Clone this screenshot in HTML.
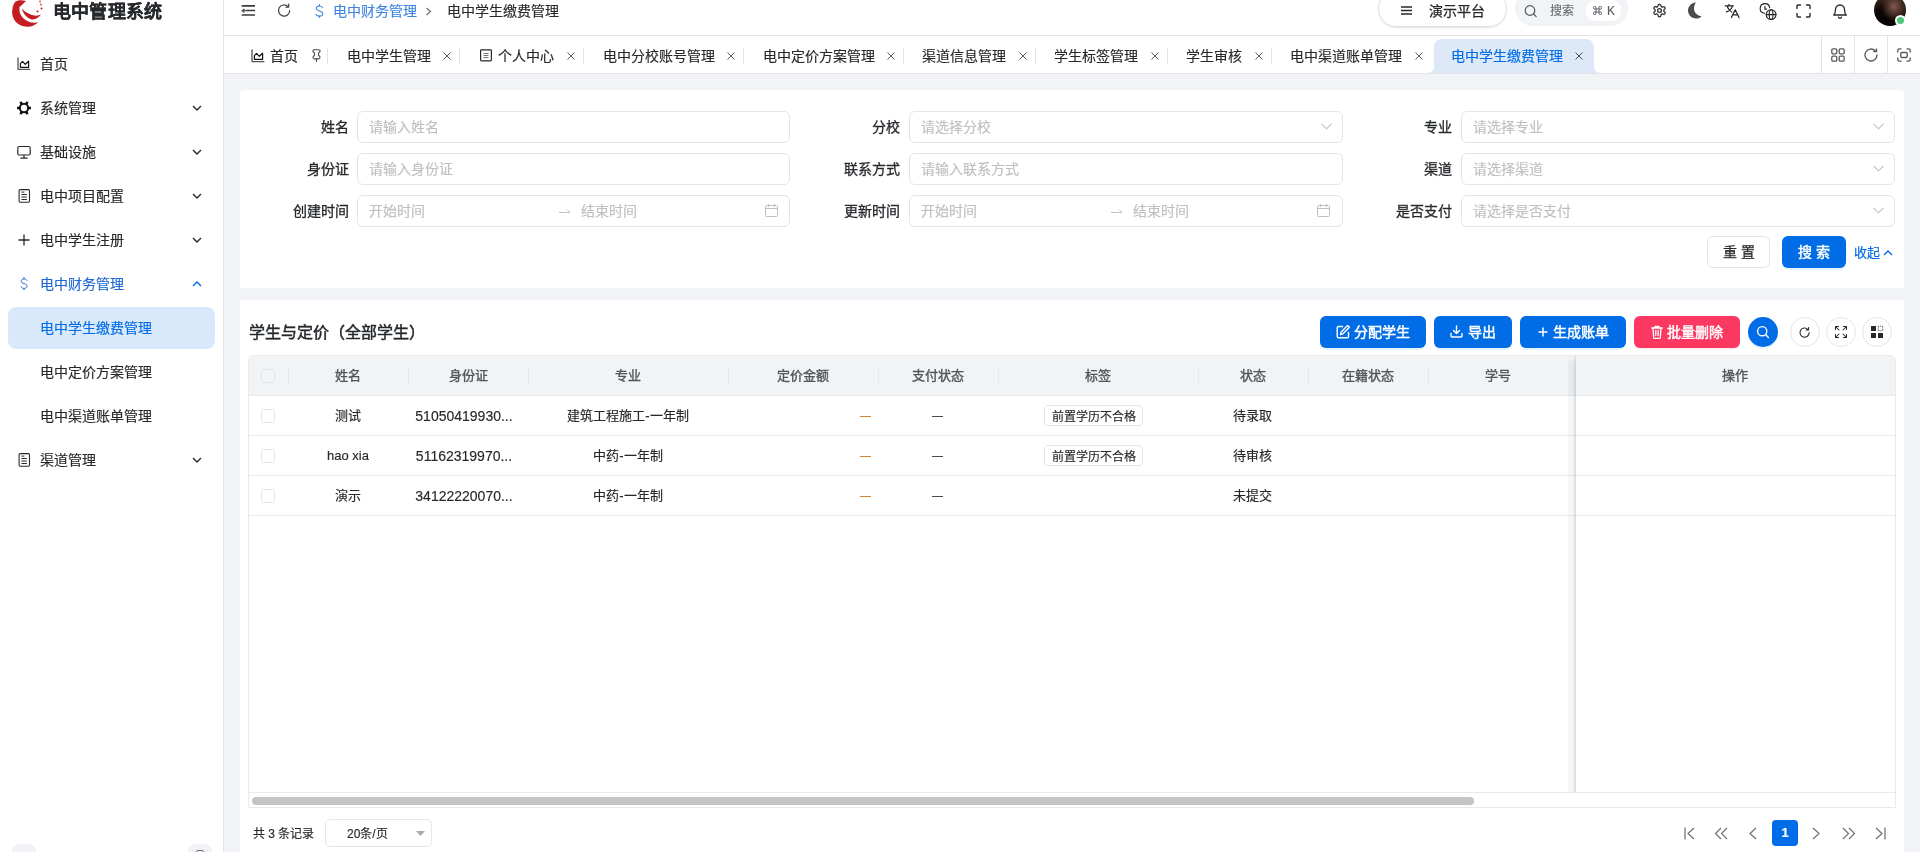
<!DOCTYPE html>
<html lang="zh-CN">
<head>
<meta charset="utf-8">
<title>电中学生缴费管理</title>
<style>
*{box-sizing:border-box;margin:0;padding:0}
html,body{width:1920px;height:852px;overflow:hidden;background:#f1f3f6;font-family:"Liberation Sans",sans-serif;font-size:14px;color:#26292c}
.abs{position:absolute}
svg{display:block}
/* sidebar */
#side{position:absolute;left:0;top:0;width:224px;height:852px;background:#fff;border-right:1px solid #e4e4e7}
.logo-t{position:absolute;left:53px;top:0px;font-size:18px;font-weight:700;color:#26292c;line-height:24px;letter-spacing:0.2px}
.mi{position:absolute;left:8px;width:207px;height:42px;border-radius:8px;display:flex;align-items:center;color:#26292c}
.mi .ic{position:absolute;left:9px;top:14px;width:14px;height:14px}
.mi .tx{position:absolute;left:32px;top:0;line-height:42px}
.mi .ch{position:absolute;left:184px;top:16px;width:10px;height:10px}
.mi.act{background:#d9e9fb;color:#006ce6}
.mi.open{color:#1f68d2}
/* header */
#hdr{position:absolute;left:224px;top:0;width:1696px;height:36px;background:#fff;border-bottom:1px solid #e4e4e7}
#tabs{position:absolute;left:224px;top:36px;width:1696px;height:38px;background:#fff;border-bottom:1px solid #e4e4e7}
.tab{position:absolute;top:0;height:37px;line-height:41px;color:#26292c;white-space:nowrap}
.sep{position:absolute;top:12px;width:1px;height:16px;background:#e4e4e7}
.x{position:absolute;top:16px;width:8px;height:8px;fill:none}
.card{position:absolute;background:#fff;border-radius:8px}
.lbl{position:absolute;font-weight:400;-webkit-text-stroke:0.3px #26292c;text-align:right;line-height:32px;width:100px;color:#26292c}
.inp{position:absolute;height:32px;border:1px solid #e4e4e7;border-radius:6px;line-height:30px;padding-left:11px;color:#bfbfbf}
.btn{position:absolute;height:32px;border-radius:6px;color:#fff;text-align:center;line-height:32px;background:#006ce6;font-size:14px}
.cb{position:absolute;width:14px;height:14px;border:1px solid #e4e5e7;border-radius:3px;background:#fff}
.th{position:absolute;top:356px;height:40px;line-height:40px;font-size:13px;font-weight:400;-webkit-text-stroke:0.35px #505458;text-align:center;color:#505458}
.td{position:absolute;line-height:40px;font-size:13px;text-align:center;color:#26292c;white-space:nowrap}
.med{-webkit-text-stroke:0.35px currentColor}
.tag{position:absolute;height:21px;border:1px solid #e4e4e7;border-radius:4px;font-size:12px;line-height:23px;text-align:center;color:#26292c;background:#fff}
</style>
</head>
<body><div id="root" style="position:absolute;left:0;top:0;width:1920px;height:852px;overflow:hidden;will-change:transform;-webkit-text-stroke-width:0.15px">

<!-- SIDEBAR -->
<div id="side">
  <svg class="abs" style="left:0;top:0" width="50" height="30" viewBox="0 0 50 30">
    <path d="M15 2 C12 6 11.5 13 13 17 C15 23 21 27 28 26.8 C32 26.7 35.5 25 38 22.3 C33 23.5 27 22 23 18 C20 15 19 11 19.5 7 C21 6 23 4 26 1 C22 0 17 0 15 2 Z" fill="#c41d22"/>
    <path d="M22 8.5 C23 13 26 17.5 31 19.2 C35 20 38.5 18 41 14.5 C38 16 34 16 30.5 14.5 C27 13 24 11 22 8.5 Z" fill="#c41d22"/>
    <circle cx="40" cy="1.5" r="0.9" fill="#d84a4e"/><circle cx="41" cy="4.5" r="0.9" fill="#d84a4e"/><circle cx="41.5" cy="8.5" r="1" fill="#c41d22"/><circle cx="37.5" cy="11.5" r="1" fill="#c41d22"/>
  </svg>
  <div class="logo-t">电中管理系统</div>

  <div class="mi" style="top:43px"><svg class="ic" viewBox="0 0 14 14" fill="none" stroke="#26292c" stroke-width="1.3" stroke-linejoin="round"><path d="M1 0.6V12.4H13.2" stroke="#555"/><path d="M3.4 10.3V6.7L5.5 4.4L8.3 7.3L11.6 4.2V10.3Z" stroke="#111" stroke-width="1.2"/></svg><span class="tx">首页</span></div>
  <div class="mi" style="top:87px"><svg class="ic" viewBox="0 0 14 14"><g transform="translate(7 7)" fill="#111"><circle r="4.2" fill="none" stroke="#111" stroke-width="2"/><rect x="4.6" y="-1.3" width="2.5" height="2.6" rx="0.4" transform="rotate(0)"/><rect x="4.6" y="-1.3" width="2.5" height="2.6" rx="0.4" transform="rotate(60)"/><rect x="4.6" y="-1.3" width="2.5" height="2.6" rx="0.4" transform="rotate(120)"/><rect x="4.6" y="-1.3" width="2.5" height="2.6" rx="0.4" transform="rotate(180)"/><rect x="4.6" y="-1.3" width="2.5" height="2.6" rx="0.4" transform="rotate(240)"/><rect x="4.6" y="-1.3" width="2.5" height="2.6" rx="0.4" transform="rotate(300)"/></g></svg><span class="tx">系统管理</span><svg class="ch" viewBox="0 0 10 10" fill="none" stroke="#26292c" stroke-width="1.4"><path d="M1 3l4 4 4-4"/></svg></div>
  <div class="mi" style="top:131px"><svg class="ic" viewBox="0 0 14 14" fill="none" stroke="#26292c" stroke-width="1.2"><rect x="0.8" y="1.5" width="12.4" height="8.5" rx="1.5"/><path d="M7 10v3M3.8 13.2h6.4" stroke-linecap="round"/></svg><span class="tx">基础设施</span><svg class="ch" viewBox="0 0 10 10" fill="none" stroke="#26292c" stroke-width="1.4"><path d="M1 3l4 4 4-4"/></svg></div>
  <div class="mi" style="top:175px"><svg class="ic" viewBox="0 0 14 14" fill="none" stroke="#26292c" stroke-width="1.1"><rect x="2.1" y="0.6" width="10.4" height="12.6" rx="1.1"/><path d="M4.4 3.1h3M4.4 5.5h5.5M4.4 8h5.5M4.4 10.5h5.5" stroke-width="1"/></svg><span class="tx">电中项目配置</span><svg class="ch" viewBox="0 0 10 10" fill="none" stroke="#26292c" stroke-width="1.4"><path d="M1 3l4 4 4-4"/></svg></div>
  <div class="mi" style="top:219px"><svg class="ic" viewBox="0 0 14 14" fill="none" stroke="#26292c" stroke-width="1.3"><path d="M7 1.5v11M1.5 7h11"/></svg><span class="tx">电中学生注册</span><svg class="ch" viewBox="0 0 10 10" fill="none" stroke="#26292c" stroke-width="1.4"><path d="M1 3l4 4 4-4"/></svg></div>
  <div class="mi open" style="top:263px"><svg class="ic" viewBox="0 0 14 14" fill="none" stroke="#2f6fd0" stroke-width="1" stroke-linecap="round"><path d="M9.9 3.4C9.4 2.4 8.4 1.9 7 1.9 5.3 1.9 4.2 2.8 4.2 4.1 4.2 5.5 5.4 6.1 7 6.5 8.8 7 10 7.6 10 9.1 10 10.5 8.8 11.4 7 11.4 5.6 11.4 4.5 10.8 4 9.8"/><path d="M7 0.5V1.9M7 11.4V12.8"/></svg><span class="tx">电中财务管理</span><svg class="ch" viewBox="0 0 10 10" fill="none" stroke="#006ce6" stroke-width="1.4"><path d="M1 7l4-4 4 4"/></svg></div>
  <div class="mi act" style="top:307px"><span class="tx">电中学生缴费管理</span></div>
  <div class="mi" style="top:351px"><span class="tx">电中定价方案管理</span></div>
  <div class="mi" style="top:395px"><span class="tx">电中渠道账单管理</span></div>
  <div class="mi" style="top:439px"><svg class="ic" viewBox="0 0 14 14" fill="none" stroke="#26292c" stroke-width="1.1"><rect x="2.1" y="0.6" width="10.4" height="12.6" rx="1.1"/><path d="M4.4 3.1h3M4.4 5.5h5.5M4.4 8h5.5M4.4 10.5h5.5" stroke-width="1"/></svg><span class="tx">渠道管理</span><svg class="ch" viewBox="0 0 10 10" fill="none" stroke="#26292c" stroke-width="1.4"><path d="M1 3l4 4 4-4"/></svg></div>

  <div class="abs" style="left:12px;top:844px;width:24px;height:24px;border-radius:6px;background:#f1f3f6"></div>
  <div class="abs" style="left:188px;top:844px;width:24px;height:24px;border-radius:6px;background:#f1f3f6"></div>
  <div class="abs" style="left:196px;top:850px;width:8px;height:8px;border-radius:2px;border:1.2px solid #6b7075"></div>
</div>

<!-- HEADER -->
<div id="hdr">
  <svg class="abs" style="left:17px;top:4px" width="14" height="13" viewBox="0 0 14 13" fill="none" stroke="#3a3d40" stroke-width="1.7" stroke-linecap="round"><path d="M1.4 1.9h12M5 6.5h8.4M1.4 11h12"/><path d="M1 6.5L3.2 4.9V8.1z" fill="#3a3d40" stroke-width="0.8" stroke-linejoin="round"/></svg>
  <svg class="abs" style="left:53px;top:3px" width="15" height="15" viewBox="0 0 15 15" fill="none" stroke="#3a3d40" stroke-width="1.2" stroke-linecap="round"><path d="M12.7 7.6A5.6 5.6 0 1 1 10.9 3.4"/><path d="M11.7 1.2v2.9H8.9" stroke-linejoin="round"/></svg>
  <svg class="abs" style="left:90px;top:4px" width="11" height="14" viewBox="0 0 11 14" fill="none" stroke="#3f86e0" stroke-width="1.05" stroke-linecap="round"><path d="M8.6 3.6C8.1 2.5 7 1.9 5.4 1.9 3.5 1.9 2.2 2.9 2.2 4.3 2.2 5.8 3.6 6.4 5.4 6.9 7.4 7.4 8.8 8.1 8.8 9.7 8.8 11.2 7.4 12.1 5.4 12.1 3.8 12.1 2.6 11.5 2 10.4"/><path d="M5.4 0.4V1.9M5.4 12.1V13.6"/></svg>
  <div class="abs" style="left:109px;top:0;line-height:22px;color:#3f86e0">电中财务管理</div>
  <svg class="abs" style="left:201px;top:7px" width="7" height="9" viewBox="0 0 7 9" fill="none" stroke="#6b7075" stroke-width="1.2"><path d="M1.5 1l4 3.5-4 3.5"/></svg>
  <div class="abs" style="left:223px;top:0;line-height:22px;color:#26292c">电中学生缴费管理</div>

  <div class="abs" style="left:1154px;top:-10px;width:129px;height:37px;border:1px solid #dcdee2;border-radius:18px;box-shadow:0 1.5px 1px rgba(0,0,0,0.07)"></div>
  <svg class="abs" style="left:1177px;top:6px" width="11" height="9" viewBox="0 0 11 9" fill="none" stroke="#26292c" stroke-width="1.4"><path d="M0 1h11M0 4.5h11M0 8h11"/></svg>
  <div class="abs" style="left:1205px;top:0;line-height:22px;color:#26292c;-webkit-text-stroke:0.25px #26292c">演示平台</div>

  <div class="abs" style="left:1291px;top:-10px;width:113px;height:36px;background:#f1f3f6;border-radius:18px"></div>
  <svg class="abs" style="left:1300px;top:5px" width="14" height="13" viewBox="0 0 14 13" fill="none" stroke="#55595d" stroke-width="1.2" stroke-linecap="round"><circle cx="6" cy="5.5" r="4.8"/><path d="M9.6 9l2.6 2.6"/></svg>
  <div class="abs" style="left:1326px;top:0;line-height:23px;font-size:12px;color:#6b6f73">搜索</div>
  <div class="abs" style="left:1362px;top:0px;width:35px;height:21px;background:#fff;border-radius:9px"></div>
  <svg class="abs" style="left:1369px;top:6px" width="9" height="9" viewBox="0 0 9 9" fill="none" stroke="#5f6368" stroke-width="1"><path d="M3 3h3v3H3zM3 3V1.8A1.3 1.3 0 1 0 1.8 3H3M6 3V1.8A1.3 1.3 0 1 1 7.2 3H6M3 6v1.2A1.3 1.3 0 1 1 1.8 6H3M6 6v1.2A1.3 1.3 0 1 0 7.2 6H6"/></svg>
  <div class="abs" style="left:1383px;top:0;line-height:22px;font-size:12px;color:#5f6368">K</div>

  <svg class="abs" style="left:1428px;top:3px" width="15" height="15" viewBox="0 0 24 24" fill="none" stroke="#26292c" stroke-width="2" stroke-linejoin="round"><path d="M12.22 2h-.44a2 2 0 0 0-2 2v.18a2 2 0 0 1-1 1.73l-.43.25a2 2 0 0 1-2 0l-.15-.08a2 2 0 0 0-2.73.73l-.22.38a2 2 0 0 0 .73 2.73l.15.1a2 2 0 0 1 1 1.72v.51a2 2 0 0 1-1 1.74l-.15.09a2 2 0 0 0-.73 2.73l.22.38a2 2 0 0 0 2.73.73l.15-.08a2 2 0 0 1 2 0l.43.25a2 2 0 0 1 1 1.73V20a2 2 0 0 0 2 2h.44a2 2 0 0 0 2-2v-.18a2 2 0 0 1 1-1.73l.43-.25a2 2 0 0 1 2 0l.15.08a2 2 0 0 0 2.73-.73l.22-.39a2 2 0 0 0-.73-2.73l-.15-.08a2 2 0 0 1-1-1.74v-.5a2 2 0 0 1 1-1.74l.15-.09a2 2 0 0 0 .73-2.73l-.22-.38a2 2 0 0 0-2.73-.73l-.15.08a2 2 0 0 1-2 0l-.43-.25a2 2 0 0 1-1-1.73V4a2 2 0 0 0-2-2z"/><circle cx="12" cy="12" r="3"/></svg>
  <svg class="abs" style="left:1463px;top:2px" width="15" height="17" viewBox="0 0 15 17"><path d="M9 0.5C4.5 0.8 1 4.3 1 8.6c0 4.4 3.6 8 8 8 2.3 0 4.3-.9 5.7-2.4C10.5 14 7 10.8 7 6.6 7 4.2 7.8 2 9 0.5z" fill="#4a4d50"/></svg>
  <svg class="abs" style="left:1500px;top:4px" width="16" height="15" viewBox="0 0 16 15" fill="none" stroke="#1f2225" stroke-width="1.2" stroke-linecap="round" stroke-linejoin="round"><path d="M4.9 -0.2v1.2M1.2 1.8H9.4M8.4 2.4C7.6 4.8 5.4 6.9 2.4 7.9M3.4 2.9C4.4 5 6 6.9 7.8 7.9"/><path d="M7.4 13.6L11.2 5.8 15 13.6M8.8 10.9h4.8"/></svg>
  <svg class="abs" style="left:1535px;top:3px" width="18" height="18" viewBox="0 0 18 18" fill="none" stroke="#1f2225" stroke-width="1.1" stroke-linecap="round"><path d="M10.7 4.6A4.8 4.8 0 1 0 5.5 10.2"/><path d="M5.9 3.2V6.1H7.5"/><circle cx="12.1" cy="11.6" r="4.9"/><ellipse cx="12.1" cy="11.6" rx="1.9" ry="4.9"/><path d="M7.2 11.6H17"/></svg>
  <svg class="abs" style="left:1572px;top:4px" width="15" height="14" viewBox="0 0 15 14" fill="none" stroke="#26292c" stroke-width="1.4" stroke-linecap="round"><path d="M1 4.5V2a1 1 0 0 1 1-1h2.5M10.5 1H13a1 1 0 0 1 1 1v2.5M14 9.5V12a1 1 0 0 1-1 1h-2.5M4.5 13H2a1 1 0 0 1-1-1V9.5"/></svg>
  <svg class="abs" style="left:1609px;top:3px" width="14" height="16" viewBox="0 0 14 16" fill="none" stroke="#26292c" stroke-width="1.3" stroke-linecap="round" stroke-linejoin="round"><path d="M2.5 6.5a4.5 4.5 0 0 1 9 0c0 4 1.8 5.5 1.8 5.5H.7s1.8-1.5 1.8-5.5"/><path d="M5.5 14.2a1.6 1.6 0 0 0 3 0"/></svg>
  <div class="abs" style="left:1650px;top:-6px;width:32px;height:32px;border-radius:50%;background:radial-gradient(ellipse 40% 45% at 62% 40%,rgba(140,95,85,0.9) 0,rgba(90,60,48,0.6) 60%,rgba(0,0,0,0) 100%),radial-gradient(circle at 35% 75%,#050302 0,#0a0605 30%,rgba(0,0,0,0) 55%),linear-gradient(160deg,#3a2418 0,#2a1a12 60%,#1a0f0a 100%)"></div>
  <div class="abs" style="left:1671px;top:15px;width:11px;height:11px;border-radius:50%;background:#4cc97a;border:2px solid #fff"></div>
</div>

<!-- TABS -->
<div id="tabs">
  <svg class="abs" style="left:27px;top:13px" width="14" height="14" viewBox="0 0 14 14" fill="none" stroke="#26292c" stroke-width="1.3" stroke-linejoin="round"><path d="M1 0.6V12.6H13.4" stroke="#555"/><path d="M3.4 10.3V6.7L5.5 4.4L8.3 7.3L11.6 4.2V10.3Z" stroke="#111" stroke-width="1.2"/></svg>
  <div class="tab" style="left:46px">首页</div>
  <svg class="abs" style="left:87px;top:13px" width="11" height="14" viewBox="0 0 11 14" fill="none" stroke="#4a4d50" stroke-width="1.1" stroke-linejoin="round"><path d="M3.2 0.8h4.6a1.3 1.3 0 0 1 0 2.6C7.3 4.5 7.3 6 8.3 7a1.6 1.6 0 0 1-1 2.9H3.7a1.6 1.6 0 0 1-1-2.9c1-1 1-2.5.5-3.6a1.3 1.3 0 0 1 0-2.6z"/><path d="M5.5 9.9v3"/></svg>
  <div class="sep" style="left:103px"></div>

  <div class="tab" style="left:123px">电中学生管理</div>
  <svg class="x" style="left:219px" viewBox="0 0 8 8" stroke="#55595d" stroke-width="1"><path d="M0.5 0.5l7 7M7.5 0.5l-7 7"/></svg>
  <div class="sep" style="left:235px"></div>

  <svg class="abs" style="left:256px;top:13px" width="12" height="13" viewBox="0 0 12 13" fill="none" stroke="#26292c" stroke-width="1.2"><rect x="0.6" y="0.9" width="10.8" height="11" rx="0.8"/><path d="M3.5 4.5h5M3.5 6.5h5M3.5 8.5h5" stroke-width="0.9" stroke="#666"/></svg>
  <div class="tab" style="left:274px">个人中心</div>
  <svg class="x" style="left:343px" viewBox="0 0 8 8" stroke="#55595d" stroke-width="1"><path d="M0.5 0.5l7 7M7.5 0.5l-7 7"/></svg>
  <div class="sep" style="left:359px"></div>

  <div class="tab" style="left:379px">电中分校账号管理</div>
  <svg class="x" style="left:503px" viewBox="0 0 8 8" stroke="#55595d" stroke-width="1"><path d="M0.5 0.5l7 7M7.5 0.5l-7 7"/></svg>
  <div class="sep" style="left:519px"></div>

  <div class="tab" style="left:539px">电中定价方案管理</div>
  <svg class="x" style="left:663px" viewBox="0 0 8 8" stroke="#55595d" stroke-width="1"><path d="M0.5 0.5l7 7M7.5 0.5l-7 7"/></svg>
  <div class="sep" style="left:679px"></div>

  <div class="tab" style="left:698px">渠道信息管理</div>
  <svg class="x" style="left:795px" viewBox="0 0 8 8" stroke="#55595d" stroke-width="1"><path d="M0.5 0.5l7 7M7.5 0.5l-7 7"/></svg>
  <div class="sep" style="left:811px"></div>

  <div class="tab" style="left:830px">学生标签管理</div>
  <svg class="x" style="left:927px" viewBox="0 0 8 8" stroke="#55595d" stroke-width="1"><path d="M0.5 0.5l7 7M7.5 0.5l-7 7"/></svg>
  <div class="sep" style="left:943px"></div>

  <div class="tab" style="left:962px">学生审核</div>
  <svg class="x" style="left:1031px" viewBox="0 0 8 8" stroke="#55595d" stroke-width="1"><path d="M0.5 0.5l7 7M7.5 0.5l-7 7"/></svg>
  <div class="sep" style="left:1047px"></div>

  <div class="tab" style="left:1066px">电中渠道账单管理</div>
  <svg class="x" style="left:1191px" viewBox="0 0 8 8" stroke="#55595d" stroke-width="1"><path d="M0.5 0.5l7 7M7.5 0.5l-7 7"/></svg>

  <svg class="abs" style="left:1202px;top:3px" width="176" height="34" viewBox="0 0 176 34"><path d="M0 34 C5 34 8 32 8 27 V8 C8 3.6 11.6 0 16 0 H160 C164.4 0 168 3.6 168 8 V27 C168 32 171 34 176 34 Z" fill="#dde8f8"/></svg>
  <div class="tab" style="left:1227px;color:#006ce6">电中学生缴费管理</div>
  <svg class="x" style="left:1351px" viewBox="0 0 8 8" stroke="#4a4d50" stroke-width="1"><path d="M0.5 0.5l7 7M7.5 0.5l-7 7"/></svg>

  <div class="abs" style="left:1597px;top:0;width:1px;height:37px;background:#e4e4e7"></div>
  <div class="abs" style="left:1630px;top:0;width:1px;height:37px;background:#e4e4e7"></div>
  <div class="abs" style="left:1663px;top:0;width:1px;height:37px;background:#e4e4e7"></div>
  <svg class="abs" style="left:1607px;top:12px" width="14" height="14" viewBox="0 0 14 14" fill="none" stroke="#55595d" stroke-width="1.3"><rect x="0.8" y="0.8" width="5" height="5" rx="1.2"/><rect x="8.2" y="0.8" width="5" height="5" rx="1.2"/><rect x="0.8" y="8.2" width="5" height="5" rx="1.2"/><rect x="8.2" y="8.2" width="5" height="5" rx="1.2"/></svg>
  <svg class="abs" style="left:1640px;top:12px" width="14" height="14" viewBox="0 0 14 14" fill="none" stroke="#55595d" stroke-width="1.3" stroke-linecap="round"><path d="M13 7A6 6 0 1 1 11.2 2.7"/><path d="M12.5 0.8v2.8H9.7"/></svg>
  <svg class="abs" style="left:1673px;top:12px" width="14" height="14" viewBox="0 0 14 14" fill="none" stroke="#55595d" stroke-width="1.3" stroke-linecap="round"><path d="M0.8 4V2.5A1.7 1.7 0 0 1 2.5 0.8H4M10 0.8h1.5a1.7 1.7 0 0 1 1.7 1.7V4M13.2 10v1.5a1.7 1.7 0 0 1-1.7 1.7H10M4 13.2H2.5A1.7 1.7 0 0 1 .8 11.5V10"/><rect x="3.8" y="4.5" width="6.4" height="5" rx="1"/></svg>
</div>

<!-- SEARCH CARD -->
<div class="card" style="left:240px;top:90px;width:1664px;height:198px;border-radius:4px 4px 0 0"></div>
<div class="lbl" style="left:249px;top:111px">姓名</div>
<div class="inp" style="left:357px;top:111px;width:433px">请输入姓名</div>
<div class="lbl" style="left:249px;top:153px">身份证</div>
<div class="inp" style="left:357px;top:153px;width:433px">请输入身份证</div>
<div class="lbl" style="left:249px;top:195px">创建时间</div>
<div class="inp" style="left:357px;top:195px;width:433px">开始时间</div>
<svg class="abs" style="left:559px;top:208px" width="12" height="6" viewBox="0 0 12 6" fill="none" stroke="#bfbfbf" stroke-width="1"><path d="M0 4.5h11M8 1.5l3 3"/></svg>
<div class="abs" style="left:581px;top:196px;line-height:30px;color:#bfbfbf">结束时间</div>
<svg class="abs" style="left:765px;top:204px" width="13" height="13" viewBox="0 0 13 13" fill="none" stroke="#bfbfbf" stroke-width="1"><rect x="0.5" y="1.5" width="12" height="11" rx="1"/><path d="M0.5 4.5h12M3.5 0v3M9.5 0v3"/></svg>

<div class="lbl" style="left:800px;top:111px">分校</div>
<div class="inp" style="left:909px;top:111px;width:434px">请选择分校</div>
<svg class="abs" style="left:1321px;top:123px" width="11" height="7" viewBox="0 0 11 7" fill="none" stroke="#bfbfbf" stroke-width="1.1"><path d="M0.5 0.8l5 5 5-5"/></svg>
<div class="lbl" style="left:800px;top:153px">联系方式</div>
<div class="inp" style="left:909px;top:153px;width:434px">请输入联系方式</div>
<div class="lbl" style="left:800px;top:195px">更新时间</div>
<div class="inp" style="left:909px;top:195px;width:434px">开始时间</div>
<svg class="abs" style="left:1111px;top:208px" width="12" height="6" viewBox="0 0 12 6" fill="none" stroke="#bfbfbf" stroke-width="1"><path d="M0 4.5h11M8 1.5l3 3"/></svg>
<div class="abs" style="left:1133px;top:196px;line-height:30px;color:#bfbfbf">结束时间</div>
<svg class="abs" style="left:1317px;top:204px" width="13" height="13" viewBox="0 0 13 13" fill="none" stroke="#bfbfbf" stroke-width="1"><rect x="0.5" y="1.5" width="12" height="11" rx="1"/><path d="M0.5 4.5h12M3.5 0v3M9.5 0v3"/></svg>

<div class="lbl" style="left:1352px;top:111px">专业</div>
<div class="inp" style="left:1461px;top:111px;width:434px">请选择专业</div>
<svg class="abs" style="left:1873px;top:123px" width="11" height="7" viewBox="0 0 11 7" fill="none" stroke="#bfbfbf" stroke-width="1.1"><path d="M0.5 0.8l5 5 5-5"/></svg>
<div class="lbl" style="left:1352px;top:153px">渠道</div>
<div class="inp" style="left:1461px;top:153px;width:434px">请选择渠道</div>
<svg class="abs" style="left:1873px;top:165px" width="11" height="7" viewBox="0 0 11 7" fill="none" stroke="#bfbfbf" stroke-width="1.1"><path d="M0.5 0.8l5 5 5-5"/></svg>
<div class="lbl" style="left:1352px;top:195px">是否支付</div>
<div class="inp" style="left:1461px;top:195px;width:434px">请选择是否支付</div>
<svg class="abs" style="left:1873px;top:207px" width="11" height="7" viewBox="0 0 11 7" fill="none" stroke="#bfbfbf" stroke-width="1.1"><path d="M0.5 0.8l5 5 5-5"/></svg>

<div class="abs" style="left:1707px;top:236px;width:63px;height:32px;border:1px solid #e4e4e7;border-radius:6px;line-height:30px;text-align:center;color:#26292c;letter-spacing:4px;text-indent:4px;-webkit-text-stroke:0.25px #26292c">重置</div>
<div class="btn" style="left:1782px;top:236px;width:64px;letter-spacing:4px;text-indent:4px;-webkit-text-stroke:0.45px #fff;box-shadow:0 2px 0 rgba(5,145,255,0.1)">搜索</div>
<div class="abs" style="left:1854px;top:237px;line-height:32px;font-size:13px;color:#006ce6">收起</div>
<svg class="abs" style="left:1883px;top:249px" width="10" height="7" viewBox="0 0 10 7" fill="none" stroke="#006ce6" stroke-width="1.4"><path d="M1 6l4-4 4 4"/></svg>

<!-- TABLE CARD -->
<div class="card" style="left:240px;top:300px;width:1664px;height:600px;border-radius:0"></div>
<div class="abs" style="left:249px;top:319px;line-height:28px;font-size:16px;-webkit-text-stroke:0.5px #26292c;color:#26292c">学生与定价（全部学生）</div>

<div class="btn" style="left:1320px;top:316px;width:106px;box-shadow:0 2px 0 rgba(5,145,255,0.1)"></div>
<svg class="abs" style="left:1336px;top:325px" width="14" height="14" viewBox="0 0 14 14" fill="none" stroke="#fff" stroke-width="1.4" stroke-linecap="round" stroke-linejoin="round"><path d="M6.5 1.5H2.5a1.3 1.3 0 0 0-1.3 1.3v8.7a1.3 1.3 0 0 0 1.3 1.3h8.7a1.3 1.3 0 0 0 1.3-1.3V7.5"/><path d="M10.8 1.2a1.3 1.3 0 0 1 1.9 1.9L7 8.8l-2.5.7.7-2.5z"/></svg>
<div class="abs" style="left:1354px;top:316px;line-height:32px;color:#fff;-webkit-text-stroke:0.45px #fff">分配学生</div>

<div class="btn" style="left:1434px;top:316px;width:78px;box-shadow:0 2px 0 rgba(5,145,255,0.1)"></div>
<svg class="abs" style="left:1450px;top:325px" width="13" height="13" viewBox="0 0 13 13" fill="none" stroke="#fff" stroke-width="1.4" stroke-linecap="round" stroke-linejoin="round"><path d="M6.5 1v7.5M3.5 5.5l3 3 3-3M1 8.5v2.5a1 1 0 0 0 1 1h9a1 1 0 0 0 1-1V8.5"/></svg>
<div class="abs" style="left:1468px;top:316px;line-height:32px;color:#fff;-webkit-text-stroke:0.45px #fff">导出</div>

<div class="btn" style="left:1520px;top:316px;width:106px;box-shadow:0 2px 0 rgba(5,145,255,0.1)"></div>
<svg class="abs" style="left:1538px;top:327px" width="10" height="10" viewBox="0 0 10 10" fill="none" stroke="#fff" stroke-width="1.5"><path d="M5 0.5v9M0.5 5h9"/></svg>
<div class="abs" style="left:1553px;top:316px;line-height:32px;color:#fff;-webkit-text-stroke:0.45px #fff">生成账单</div>

<div class="btn" style="left:1634px;top:316px;width:106px;background:#fb3862;box-shadow:0 2px 0 rgba(255,38,5,0.06)"></div>
<svg class="abs" style="left:1651px;top:325px" width="12" height="14" viewBox="0 0 12 14" fill="none" stroke="#fff" stroke-width="1.3" stroke-linecap="round" stroke-linejoin="round"><path d="M0.8 3h10.4M4 3V1.5h4V3M2 3l.7 9.5a1 1 0 0 0 1 .9h4.6a1 1 0 0 0 1-.9L10 3M4.8 5.5v5M7.2 5.5v5"/></svg>
<div class="abs" style="left:1667px;top:316px;line-height:32px;color:#fff;-webkit-text-stroke:0.45px #fff">批量删除</div>

<div class="abs" style="left:1748px;top:317px;width:30px;height:30px;border-radius:50%;background:#006ce6;box-shadow:0 2px 0 rgba(5,145,255,0.1)"></div>
<svg class="abs" style="left:1756px;top:325px" width="14" height="14" viewBox="0 0 14 14" fill="none" stroke="#fff" stroke-width="1.4" stroke-linecap="round"><circle cx="6.2" cy="6.2" r="4.6"/><path d="M9.6 9.6l2.8 2.8"/></svg>
<div class="abs" style="left:1790px;top:317px;width:30px;height:30px;border-radius:50%;border:1px solid #e4e4e7"></div>
<svg class="abs" style="left:1798px;top:325px" width="14" height="14" viewBox="0 0 14 14" fill="none" stroke="#26292c" stroke-width="1.1" stroke-linecap="round" stroke-linejoin="round"><path d="M11.2 7.6A4.6 4.6 0 1 1 9.9 4.4"/><path d="M10.6 2.6v2.3H8.3"/></svg>
<div class="abs" style="left:1826px;top:317px;width:30px;height:30px;border-radius:50%;border:1px solid #e4e4e7"></div>
<svg class="abs" style="left:1834px;top:325px" width="14" height="14" viewBox="0 0 14 14" fill="none" stroke="#26292c" stroke-width="1.05" stroke-linecap="round"><path d="M1.5 1.5l3.5 3.5M1.5 1.5v3M1.5 1.5h3M12.5 1.5L9 5M12.5 1.5v3M12.5 1.5h-3M1.5 12.5L5 9M1.5 12.5v-3M1.5 12.5h3M12.5 12.5L9 9M12.5 12.5v-3M12.5 12.5h-3"/></svg>
<div class="abs" style="left:1862px;top:317px;width:30px;height:30px;border-radius:50%;border:1px solid #e4e4e7"></div>
<svg class="abs" style="left:1870px;top:325px" width="14" height="14" viewBox="0 0 14 14"><rect x="1" y="1" width="5" height="5" fill="#26292c"/><rect x="8.3" y="1.3" width="4.4" height="4.4" fill="none" stroke="#26292c" stroke-width="0.8" stroke-dasharray="1 0.8"/><rect x="1" y="8" width="5" height="5" fill="#26292c"/><rect x="8" y="8" width="5" height="5" fill="#26292c"/></svg>

<!-- TABLE -->
<div class="abs" style="left:248px;top:355px;width:1648px;height:453px;border:1px solid #e8eaec;border-radius:6px 6px 0 0;overflow:hidden;background:#fff">
  <div class="abs" style="left:0;top:0;width:1646px;height:40px;background:#f1f3f5;border-bottom:1px solid #e8eaec"></div>
  <div class="abs" style="left:0;top:79px;width:1646px;height:1px;background:#e8eaec"></div>
  <div class="abs" style="left:0;top:119px;width:1646px;height:1px;background:#e8eaec"></div>
  <div class="abs" style="left:0;top:159px;width:1646px;height:1px;background:#e8eaec"></div>
  <div class="abs" style="left:0;top:436px;width:1646px;height:1px;background:#e8eaec"></div>
  <div class="abs" style="left:3px;top:441px;width:1222px;height:8px;border-radius:4px;background:#c4c4c4"></div>
</div>
<div class="abs" style="left:288px;top:366px;width:1px;height:19px;background:#e6e7ea"></div>
<div class="abs" style="left:408px;top:366px;width:1px;height:19px;background:#e6e7ea"></div>
<div class="abs" style="left:528px;top:366px;width:1px;height:19px;background:#e6e7ea"></div>
<div class="abs" style="left:728px;top:366px;width:1px;height:19px;background:#e6e7ea"></div>
<div class="abs" style="left:878px;top:366px;width:1px;height:19px;background:#e6e7ea"></div>
<div class="abs" style="left:998px;top:366px;width:1px;height:19px;background:#e6e7ea"></div>
<div class="abs" style="left:1198px;top:366px;width:1px;height:19px;background:#e6e7ea"></div>
<div class="abs" style="left:1308px;top:366px;width:1px;height:19px;background:#e6e7ea"></div>
<div class="abs" style="left:1428px;top:366px;width:1px;height:19px;background:#e6e7ea"></div>
<div class="cb" style="left:261px;top:369px;background:#f1f3f5;border-color:#e2e4e7"></div>
<div class="th" style="left:288px;width:120px">姓名</div>
<div class="th" style="left:408px;width:120px">身份证</div>
<div class="th" style="left:528px;width:200px">专业</div>
<div class="th" style="left:728px;width:150px">定价金额</div>
<div class="th" style="left:878px;width:120px">支付状态</div>
<div class="th" style="left:998px;width:200px">标签</div>
<div class="th" style="left:1198px;width:110px">状态</div>
<div class="th" style="left:1308px;width:120px">在籍状态</div>
<div class="th" style="left:1428px;width:140px">学号</div>
<div class="th" style="left:1575px;width:320px">操作</div>
<div class="cb" style="left:261px;top:409px"></div>
<div class="td" style="left:288px;top:396px;width:120px">测试</div>
<div class="td" style="left:408px;top:396px;width:112px;font-size:14px">51050419930...</div>
<div class="td" style="left:528px;top:396px;width:200px">建筑工程施工-一年制</div>
<div class="abs" style="left:860px;top:416px;width:11px;height:1.3px;background:#d2822f"></div>
<div class="abs" style="left:932px;top:416px;width:11px;height:1.3px;background:#4a4d50"></div>
<div class="tag" style="left:1044px;top:405px;width:99px">前置学历不合格</div>
<div class="td" style="left:1197px;top:396px;width:110px">待录取</div>
<div class="cb" style="left:261px;top:449px"></div>
<div class="td" style="left:288px;top:436px;width:120px">hao xia</div>
<div class="td" style="left:408px;top:436px;width:112px;font-size:14px">51162319970...</div>
<div class="td" style="left:528px;top:436px;width:200px">中药-一年制</div>
<div class="abs" style="left:860px;top:456px;width:11px;height:1.3px;background:#d2822f"></div>
<div class="abs" style="left:932px;top:456px;width:11px;height:1.3px;background:#4a4d50"></div>
<div class="tag" style="left:1044px;top:445px;width:99px">前置学历不合格</div>
<div class="td" style="left:1197px;top:436px;width:110px">待审核</div>
<div class="cb" style="left:261px;top:489px"></div>
<div class="td" style="left:288px;top:476px;width:120px">演示</div>
<div class="td" style="left:408px;top:476px;width:112px;font-size:14px">34122220070...</div>
<div class="td" style="left:528px;top:476px;width:200px">中药-一年制</div>
<div class="abs" style="left:860px;top:496px;width:11px;height:1.3px;background:#d2822f"></div>
<div class="abs" style="left:932px;top:496px;width:11px;height:1.3px;background:#4a4d50"></div>
<div class="td" style="left:1197px;top:476px;width:110px">未提交</div>
<div class="abs" style="left:1568px;top:360px;width:8px;height:432px;border-radius:3px 3px 0 0;background:linear-gradient(to right,rgba(20,40,60,0.035),rgba(20,40,60,0.06))"></div>
<div class="abs" style="left:1574px;top:356px;width:2px;height:436px;background:rgba(0,0,0,0.07)"></div>

<!-- FOOTER -->
<div class="abs" style="left:253px;top:820px;line-height:28px;font-size:12px;color:#26292c">共 3 条记录</div>
<div class="abs" style="left:325px;top:819px;width:107px;height:28px;border:1px solid #e6e7ea;border-radius:5px;font-size:12px;line-height:28px;padding-left:21px;color:#26292c">20条/页</div>
<svg class="abs" style="left:416px;top:831px" width="9" height="6" viewBox="0 0 9 6"><path d="M0 0h9L4.5 5z" fill="#a8abb2"/></svg>
<svg class="abs" style="left:1684px;top:827px" width="11" height="13" viewBox="0 0 11 13" fill="none" stroke="#6b7075" stroke-width="1.2"><path d="M1 0.5v12M10 1L4 6.5l6 5.5"/></svg>
<svg class="abs" style="left:1714px;top:827px" width="14" height="13" viewBox="0 0 14 13" fill="none" stroke="#6b7075" stroke-width="1.2"><path d="M7 1L1.5 6.5 7 12M13 1L7.5 6.5 13 12"/></svg>
<svg class="abs" style="left:1748px;top:827px" width="9" height="13" viewBox="0 0 9 13" fill="none" stroke="#6b7075" stroke-width="1.2"><path d="M8 1L2 6.5 8 12"/></svg>
<div class="abs" style="left:1772px;top:820px;width:26px;height:26px;border-radius:4px;background:#006ce6;color:#fff;font-weight:700;font-size:13px;line-height:26px;text-align:center">1</div>
<svg class="abs" style="left:1812px;top:827px" width="9" height="13" viewBox="0 0 9 13" fill="none" stroke="#6b7075" stroke-width="1.2"><path d="M1 1l6 5.5L1 12"/></svg>
<svg class="abs" style="left:1842px;top:827px" width="14" height="13" viewBox="0 0 14 13" fill="none" stroke="#6b7075" stroke-width="1.2"><path d="M1 1l5.5 5.5L1 12M7 1l5.5 5.5L7 12"/></svg>
<svg class="abs" style="left:1875px;top:827px" width="11" height="13" viewBox="0 0 11 13" fill="none" stroke="#6b7075" stroke-width="1.2"><path d="M10 0.5v12M1 1l6 5.5L1 12"/></svg>
</div></body>
</html>
